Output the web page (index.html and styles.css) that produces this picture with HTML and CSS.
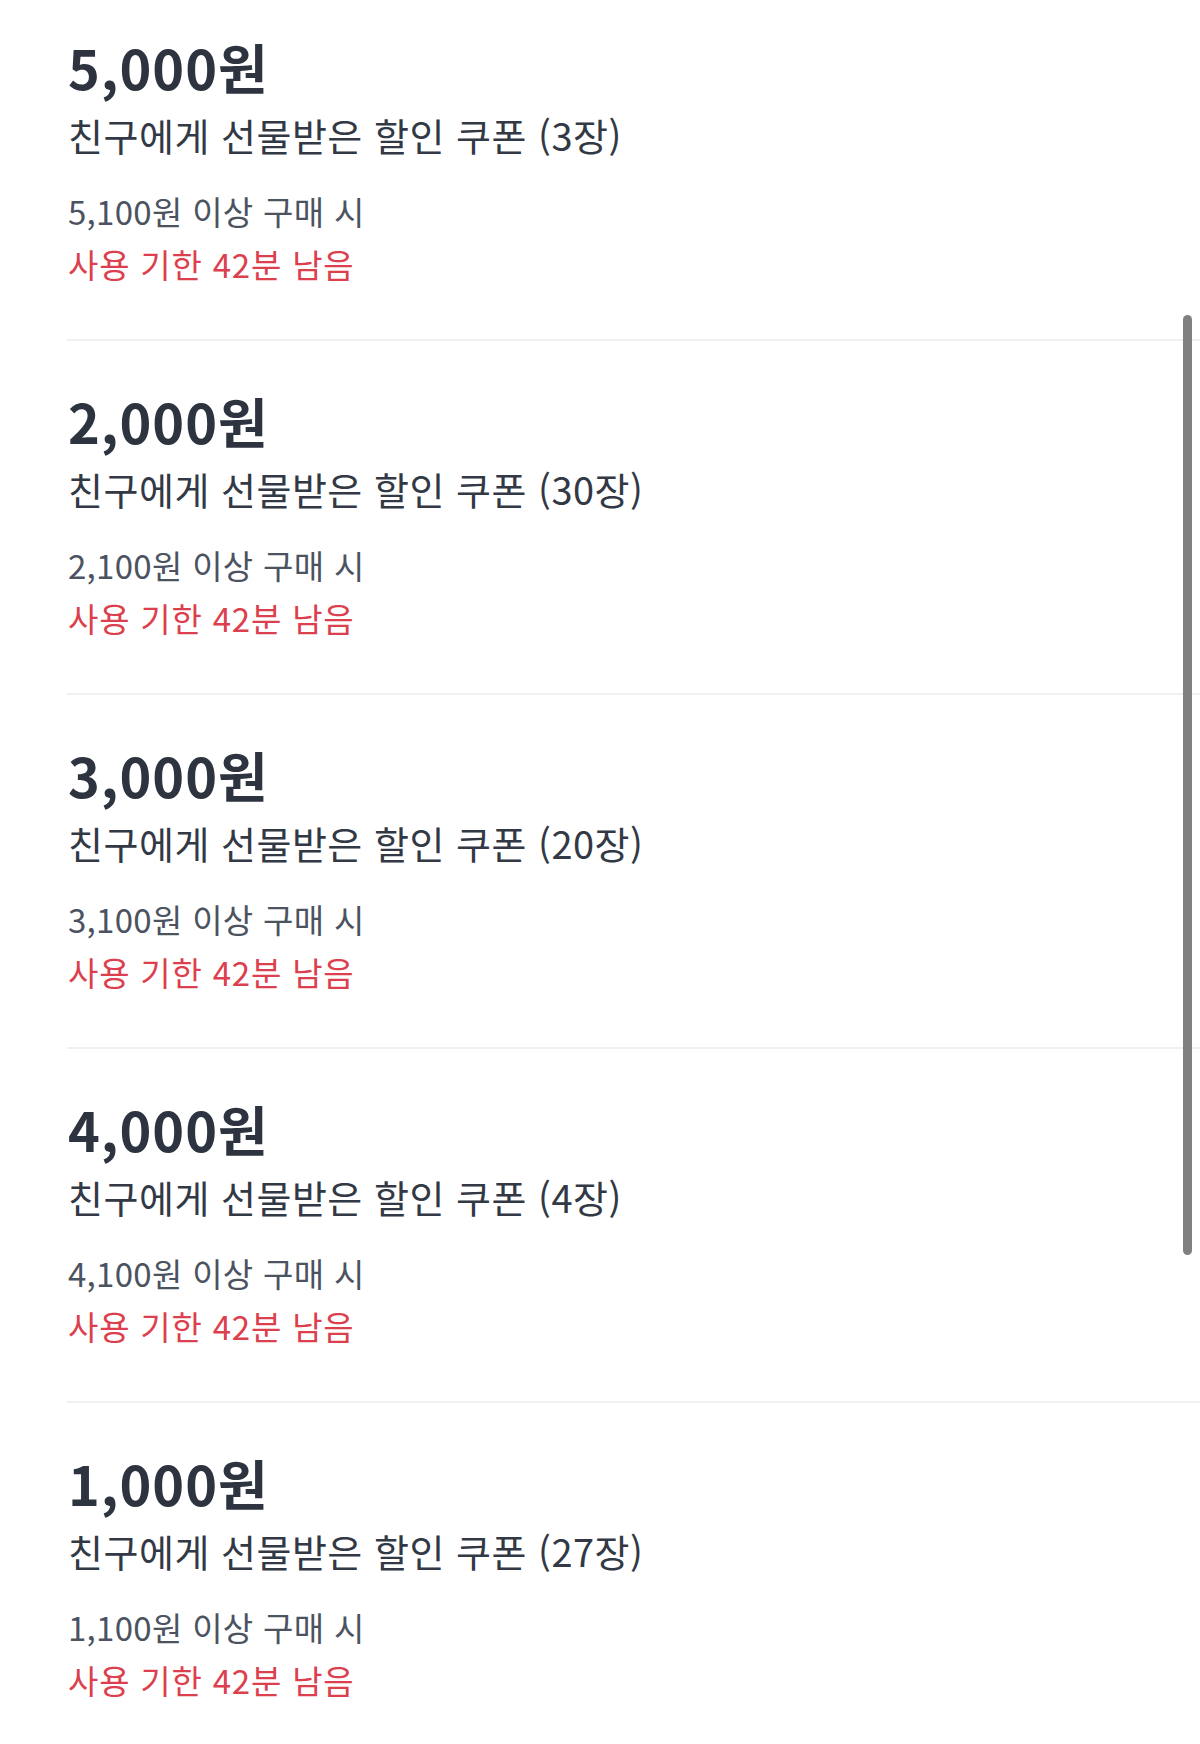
FILE: index.html
```html
<!DOCTYPE html>
<html lang="ko">
<head>
  <meta charset="UTF-8">
  <meta name="viewport" content="width=device-width, initial-scale=1.0">
  <title>쿠폰</title>
  <link rel="stylesheet" href="styles.css">
</head>
<body>
  <ul id="coupon-list">
    <li class="coupon">
      <div class="amount">5,000원</div>
      <div class="name">친구에게 선물받은 할인 쿠폰 (3장)</div>
      <div class="min">5,100원 이상 구매 시</div>
      <div class="expire">사용 기한 42분 남음</div>
    </li>
    <li class="coupon">
      <div class="amount">2,000원</div>
      <div class="name">친구에게 선물받은 할인 쿠폰 (30장)</div>
      <div class="min">2,100원 이상 구매 시</div>
      <div class="expire">사용 기한 42분 남음</div>
    </li>
    <li class="coupon">
      <div class="amount">3,000원</div>
      <div class="name">친구에게 선물받은 할인 쿠폰 (20장)</div>
      <div class="min">3,100원 이상 구매 시</div>
      <div class="expire">사용 기한 42분 남음</div>
    </li>
    <li class="coupon">
      <div class="amount">4,000원</div>
      <div class="name">친구에게 선물받은 할인 쿠폰 (4장)</div>
      <div class="min">4,100원 이상 구매 시</div>
      <div class="expire">사용 기한 42분 남음</div>
    </li>
    <li class="coupon">
      <div class="amount">1,000원</div>
      <div class="name">친구에게 선물받은 할인 쿠폰 (27장)</div>
      <div class="min">1,100원 이상 구매 시</div>
      <div class="expire">사용 기한 42분 남음</div>
    </li>
  </ul>
  <div id="scroll-thumb"></div>
</body>
</html>
```

FILE: styles.css
```css
:root {
  --title-color: #2d3440;
  --text-color: #323945;
  --sub-color: #4b5361;
  --red-color: #dc3f4d;
  --line-color: #f0f0f2;
}
html, body {
  overflow: hidden;
}
body {
  margin: 0;
  font-family: 'Noto Sans CJK KR', 'Noto Sans', sans-serif;
  background: #fff;
  color: var(--text-color);
}
#coupon-list {
  list-style: none;
  margin: 0 0 0 67px;
  padding: 0;
}
.coupon {
  padding: 48px 0 48px 1px;
  border-bottom: 2px solid var(--line-color);
}
.coupon:first-child { padding-top: 35px; }
.amount {
  font-size: 54px;
  font-weight: 700;
  line-height: 64px;
  color: var(--title-color);
  letter-spacing: 1px;
}
.name {
  margin-top: 14px;
  font-size: 38px;
  line-height: 44px;
  letter-spacing: 0.5px;
}
.min {
  margin-top: 28px;
  font-size: 33px;
  line-height: 53px;
  color: var(--sub-color);
  letter-spacing: 0.3px;
}
.expire {
  font-size: 33px;
  line-height: 53px;
  color: var(--red-color);
  letter-spacing: 0.8px;
}
/* overlay scrollbar */
#scroll-thumb {
  position: fixed;
  top: 315px;
  right: 8px;
  width: 9px;
  height: 940px;
  border-radius: 5px;
  background: #808080;
}
```
